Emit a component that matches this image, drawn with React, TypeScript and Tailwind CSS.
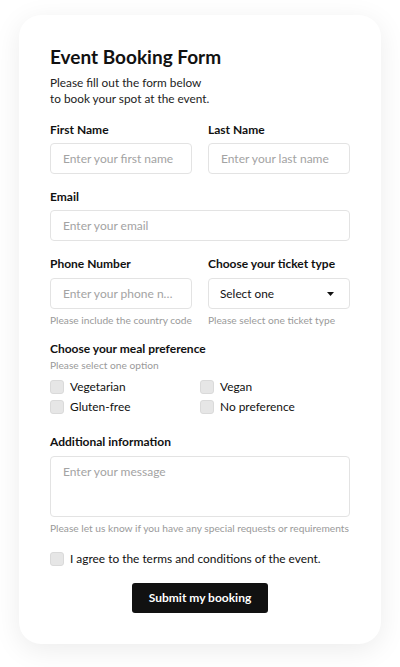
import React from "react";

const font = { fontFamily: 'Lato, "Noto Sans", sans-serif' };

const Label = ({ children }: { children: React.ReactNode }) => (
  <label className="block text-[12px] leading-4 font-bold text-[#111] whitespace-nowrap">{children}</label>
);

const Help = ({ children }: { children: React.ReactNode }) => (
  <p className="text-[10.2px] leading-4 text-[#9a9a9a] whitespace-nowrap">{children}</p>
);

const inputCls =
  "w-full h-[31px] px-3 rounded-[4px] border border-[#e3e3e3] bg-white text-[12px] text-[#111] placeholder:text-[#a3a3a3] outline-none text-ellipsis";

const Check = ({ label }: { label: string }) => (
  <label className="flex items-center gap-[6px] h-[18px] text-[11.9px] text-[#111] whitespace-nowrap">
    <span className="w-[14px] h-[14px] rounded-[3px] bg-[#e6e6e6] border border-[#dadada] shrink-0" />
    {label}
  </label>
);

export default function App() {
  return (
    <div className="w-[400px] min-h-[667px] bg-white pt-[15px] pb-6" style={font}>
      <div className="mx-[19px] rounded-[22px] bg-white shadow-[0_6px_28px_rgba(0,0,0,0.08)] px-[31px] pt-[30px] pb-[31px]">
        <h1 className="text-[19px] leading-6 font-bold text-[#111]">Event Booking Form</h1>
        <p className="mt-[6px] text-[11.8px] leading-4 text-[#222]">
          Please fill out the form below
          <br />
          to book your spot at the event.
        </p>

        <div className="mt-[15px] grid grid-cols-2 gap-4">
          <div>
            <Label>First Name</Label>
            <input className={`${inputCls} mt-[5px]`} placeholder="Enter your first name" />
          </div>
          <div>
            <Label>Last Name</Label>
            <input className={`${inputCls} mt-[5px]`} placeholder="Enter your last name" />
          </div>
        </div>

        <div className="mt-[15px]">
          <Label>Email</Label>
          <input className={`${inputCls} mt-[5px]`} placeholder="Enter your email" />
        </div>

        <div className="mt-[15px] grid grid-cols-2 gap-4">
          <div>
            <Label>Phone Number</Label>
            <input className={`${inputCls} mt-[6px]`} placeholder="Enter your phone number" />
            <div className="mt-[3px]">
              <Help>Please include the country code</Help>
            </div>
          </div>
          <div>
            <Label>Choose your ticket type</Label>
            <div className="mt-[6px] h-[31px] pl-[11px] pr-3 rounded-[4px] border border-[#e3e3e3] flex items-center justify-between text-[11.8px] text-[#111]">
              <span>Select one</span>
              <svg width="7" height="4" viewBox="0 0 7 4" className="mr-[3px]">
                <path d="M0 0h7L3.5 4z" fill="#111" />
              </svg>
            </div>
            <div className="mt-[3px]">
              <Help>Please select one ticket type</Help>
            </div>
          </div>
        </div>

        <div className="mt-[13px]">
          <Label>Choose your meal preference</Label>
          <Help>Please select one option</Help>
          <div className="mt-[5px] grid grid-cols-2 gap-y-[2px] gap-x-0">
            <Check label="Vegetarian" />
            <Check label="Vegan" />
            <Check label="Gluten-free" />
            <Check label="No preference" />
          </div>
        </div>

        <div className="mt-[18px]">
          <Label>Additional information</Label>
          <textarea
            className="mt-[6px] block w-full h-[61px] px-3 py-[6px] rounded-[4px] border border-[#e3e3e3] text-[12px] leading-[18px] text-[#111] placeholder:text-[#a3a3a3] outline-none resize-none"
            placeholder="Enter your message"
          />
          <div className="mt-[3px]">
            <Help>Please let us know if you have any special requests or requirements</Help>
          </div>
        </div>

        <div className="mt-[14px]">
          <Check label="I agree to the terms and conditions of the event." />
        </div>

        <div className="mt-[15px] flex justify-center">
          <button className="w-[136px] h-[30px] rounded-[3px] bg-[#111] text-white text-[12px] font-bold">
            Submit my booking
          </button>
        </div>
      </div>
    </div>
  );
}
